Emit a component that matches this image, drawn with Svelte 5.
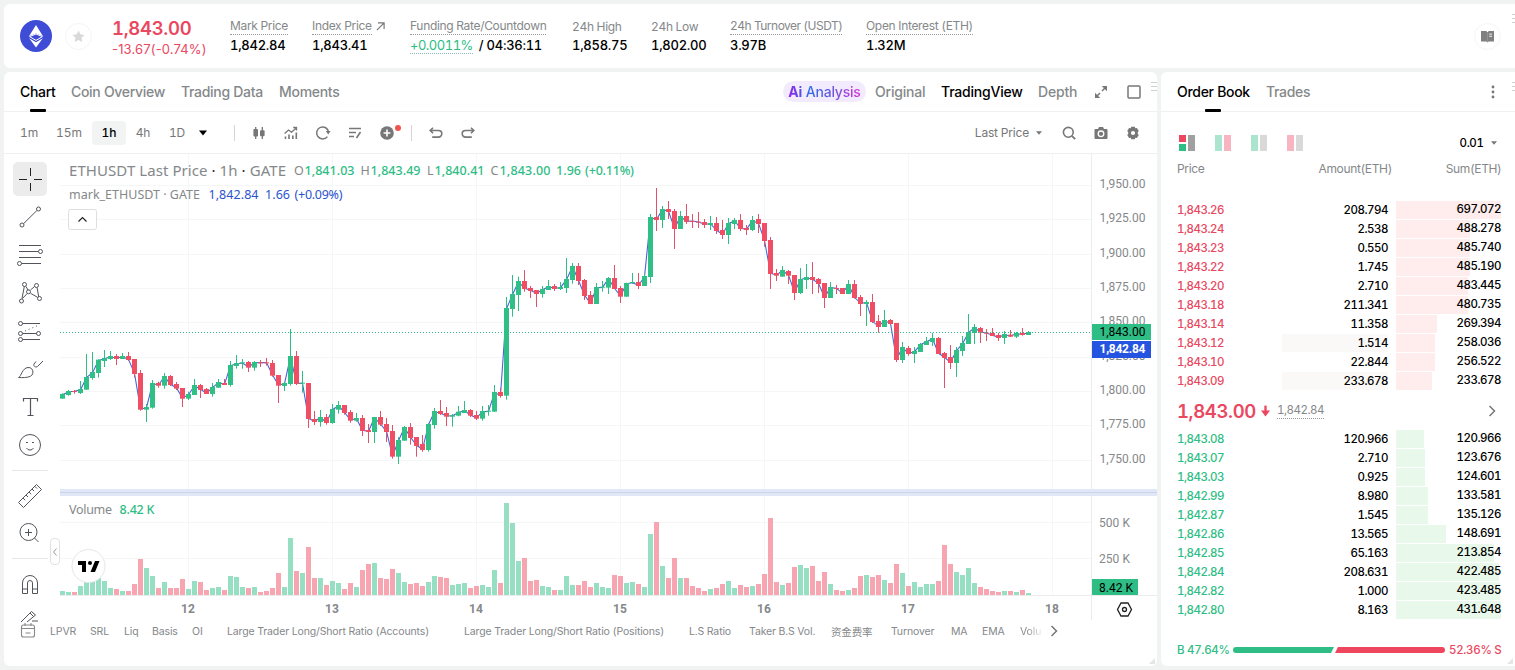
<script lang="ts">
  type Candle = { x: number; up: boolean; high: number; top: number; bottom: number; low: number; vol: number };

  const stats = [
    { label: "Mark Price", value: "1,842.84", dotted: true },
    { label: "Index Price", value: "1,843.41", dotted: true, arrow: true },
    { label: "Funding Rate/Countdown", value: "/ 04:36:11", rate: "+0.0011%", dotted: true },
    { label: "24h High", value: "1,858.75" },
    { label: "24h Low", value: "1,802.00" },
    { label: "24h Turnover (USDT)", value: "3.97B", dotted: true, tight: true },
    { label: "Open Interest (ETH)", value: "1.32M", dotted: true },
  ];

  const tabs = ["Chart", "Coin Overview", "Trading Data", "Moments"];
  const intervals = ["1m", "15m", "1h", "4h", "1D"];
  let activeTab = $state("Chart");
  let interval = $state("1h");

  // price, amount, sum, depth width, amount highlight width
  const asks: [string, string, string, number, number][] = [
    ["1,843.26", "208.794", "697.072", 105, 0],
    ["1,843.24", "2.538", "488.278", 74, 0],
    ["1,843.23", "0.550", "485.740", 74, 0],
    ["1,843.22", "1.745", "485.190", 74, 0],
    ["1,843.20", "2.710", "483.445", 72, 0],
    ["1,843.18", "211.341", "480.735", 72, 0],
    ["1,843.14", "11.358", "269.394", 41, 0],
    ["1,843.12", "1.514", "258.036", 39, 106],
    ["1,843.10", "22.844", "256.522", 39, 0],
    ["1,843.09", "233.678", "233.678", 36, 106],
  ];
  const bids: [string, string, string, number, number][] = [
    ["1,843.08", "120.966", "120.966", 28, 0],
    ["1,843.07", "2.710", "123.676", 29, 0],
    ["1,843.03", "0.925", "124.601", 29, 0],
    ["1,842.99", "8.980", "133.581", 32, 0],
    ["1,842.87", "1.545", "135.126", 32, 0],
    ["1,842.86", "13.565", "148.691", 50, 0],
    ["1,842.85", "65.163", "213.854", 98, 0],
    ["1,842.84", "208.631", "422.485", 103, 0],
    ["1,842.82", "1.000", "423.485", 104, 0],
    ["1,842.80", "8.163", "431.648", 105, 0],
  ];

  const indicators = [
    "LPVR", "SRL", "Liq", "Basis", "OI",
    "Large Trader Long/Short Ratio (Accounts)",
    "Large Trader Long/Short Ratio (Positions)",
    "L.S Ratio", "Taker B.S Vol.", "资金费率", "Turnover", "MA", "EMA", "Volu",
  ];

  // G = up, R = down; high top bottom low in thirds of a pixel below base
  const series = [
    {
      base: 280,
      rows: `G340 342 356 356,G330 333 345 347,R330 333 336 341,G303 327 339 342,G222 291 329 329,G216 276 294 299,
G238 239 279 293,G210 234 243 261,G213 228 237 240,R222 228 237 255,G219 228 237 237,R216 228 240 243,
R237 237 282 293,R270 279 389 392,G372 381 389 426,G300 309 383 386,R305 309 317 323,G279 288 317 326,
R285 288 315 318,R306 312 326 330,R324 324 356 381,G335 342 356 360,G297 315 345 345,R312 315 330 354,
R324 327 342 342,G309 321 342 350,G297 306 323 324,R297 309 315 315,G243 255 315 320,G225 249 258 266,
G237 247 249 266,R243 246 263 276,G243 246 263 272,R240 247 250 261,R234 247 250 257,R240 249 287 290,
R285 285 317 369,G305 309 318 333,G147 228 312 317,R213 228 312 315,G273 308 311 338,R309 309 417 444,
R393 417 426 435,G390 411 426 440,R402 411 429 434,G372 387 429 431,G363 375 389 401,R375 375 399 404,
R390 396 422 428,G399 414 422 425,R405 414 453 468,R432 450 456 489,G411 411 456 489,R393 411 434 438,
R414 432 456 486,R435 453 530 536,G471 480 530 552,G438 441 482 482,R429 441 474 494,R471 471 498 530,
R465 492 510 515,G429 432 510 515,G384 393 435 446,R360 393 402 405,R381 399 410 438,G402 405 410 440,
G378 395 407 409,G363 390 399 399,R387 390 407 411,R393 405 416 420,G378 393 416 422,G375 392 395 407,
G315 336 395 395,R324 336 348 353,G51 84 347 359`,
    },
    {
      base: 180,
      rows: `G285 342 387 410,G290 303 345 393,R270 303 327 335,R318 324 333 354,R330 330 342 381,G318 327 342 353,
G300 318 330 330,R312 318 327 333,G306 321 327 330,G234 297 324 339,G249 258 300 311,R249 258 303 315,
R297 300 348 360,R333 345 372 372,G309 321 372 372,G303 320 323 335,G291 294 323 342,R255 294 327 327,
R318 324 350 369,G308 309 350 350,G279 306 309 312,R279 306 318 327,G282 288 318 318,G102 111 291 309,
R24 111 120 153,G78 87 120 144,R63 87 96 117,R87 93 147 207,G93 108 147 147,R72 108 126 132,
R102 123 125 144,R96 125 128 144,R117 126 135 144,G108 129 135 150,R111 129 153 162,R120 150 165 177,
G114 129 165 192,G114 120 132 147,R102 120 147 153,R135 144 150 165,G108 120 150 153,R102 117 132 159,
R129 129 183 200,R171 180 282 327`,
    },
    {
      base: 230,
      rows: `R117 129 137 153,G108 120 140 140,R120 123 137 162,R135 135 189 210,G114 147 189 192,G102 141 150 177,
R96 141 150 192,R144 147 162 189,R159 159 204 234,G156 171 204 204,R165 174 177 192,R174 174 192 192,
G150 162 192 192,R150 162 204 206,R195 201 222 258,G210 216 222 288,R192 216 276 279,R255 273 291 308,
G240 270 291 291,R267 270 282 285,R279 279 390 396,G336 351 390 399,R348 354 372 377,G351 363 372 399,
G339 342 366 366,G321 333 345 345,G309 324 336 348,R321 324 372 372,R366 369 384 474,R345 381 399 417,
G351 360 399 441,G318 339 363 378,G252 306 342 342,G282 291 309 342,R291 294 308 339,R297 308 311 333,
R294 309 318 318,R309 315 324 333,G303 312 324 342,R300 314 320 321,G306 309 320 324,R294 309 315 317,
G303 306 315 315`,
    },
  ];

  const volumes = [
    4, 3, 3, 9, 13, 17, 17, 14, 7, 6, 4, 4, 11, 36, 27, 19, 7, 13, 7, 7, 16, 6, 14, 13, 5, 7, 8, 5, 19, 18,
    8, 7, 8, 3, 4, 7, 22, 8, 57, 24, 22, 48, 17, 17, 10, 14, 12, 6, 12, 8, 25, 31, 32, 17, 16, 26, 22, 13,
    11, 12, 9, 13, 19, 18, 17, 10, 11, 12, 7, 9, 10, 8, 25, 12, 92, 72, 34, 37, 14, 15, 9, 8, 5, 5, 19, 10,
    10, 14, 8, 12, 8, 7, 20, 19, 12, 13, 11, 8, 61, 73, 29, 17, 37, 17, 17, 9, 7, 4, 6, 7, 11, 14, 7, 10, 8,
    9, 11, 21, 77, 13, 10, 12, 28, 30, 27, 29, 14, 23, 11, 5, 4, 5, 7, 19, 20, 18, 20, 15, 12, 31, 22, 9, 13,
    8, 11, 11, 14, 50, 31, 23, 20, 27, 12, 8, 6, 4, 3, 4, 4, 3, 5, 2,
  ];

  const candles: Candle[] = [];
  for (const part of series) {
    for (const row of part.rows.split(",")) {
      const s = row.trim();
      const [high, top, bottom, low] = s.slice(1).split(" ").map((v) => part.base + Number(v) / 3);
      const i = candles.length;
      candles.push({ x: 62.5 + i * 6, up: s[0] === "G", high, top, bottom, low, vol: volumes[i] });
    }
  }

  const markLine = candles.map((c) => `${c.x},${(c.up ? c.top + 0.7 : c.bottom - 0.7).toFixed(1)}`).join(" ");

  const days = [12, 13, 14, 15, 16, 17, 18].map((d, i) => ({ label: d, x: 188.5 + i * 144 }));
  const prices = [1950, 1925, 1900, 1875, 1850, 1825, 1800, 1775, 1750].map((p, i) => ({
    label: `${Math.floor(p / 1000)},${p % 1000}.00`,
    y: 185.5 + Math.round(i * 34.33),
  }));
</script>

<div class="page">
  <header class="panel summary">
    <svg class="coin" viewBox="0 0 32 32">
      <circle cx="16" cy="16" r="16" fill="#3f4cd6" />
      <path d="M16 5L9 16.2l7-2.6 7 2.6z" fill="#fff" />
      <path d="M9.6 16.6L16 14l6.4 2.6L16 20.4z" fill="#3f4cd6" stroke="#fff" stroke-width="1" />
      <path d="M9.2 18.2L16 22.2l6.8-4L16 27.5z" fill="#fff" />
    </svg>
    <span class="star">
      <svg viewBox="0 0 16 16" width="15" height="15">
        <path d="M8 1.6l2 4.1 4.5.6-3.3 3.1.8 4.5L8 11.8l-4 2.1.8-4.5L1.5 6.3 6 5.7z" fill="#d9d9d9" />
      </svg>
    </span>
    <div class="last">
      <strong>1,843.00</strong>
      <span>-13.67(-0.74%)</span>
    </div>
    {#each stats as s}
      <div class="stat">
        <div class="stat-label" class:tight={s.tight}>
          <span class:dotted={s.dotted}>{s.label}</span>
          {#if s.arrow}
            <svg viewBox="0 0 10 10" width="9" height="9"><path d="M1 9L9 1M2.2 1H9v6.8" fill="none" stroke="#777" stroke-width="1.3" /></svg>
          {/if}
        </div>
        <div class="stat-value">
          {#if s.rate}<span class="rate">{s.rate}</span>{/if}{s.value}
        </div>
      </div>
    {/each}
    <span class="book">
      <svg viewBox="0 0 12 12" width="13" height="13">
        <path d="M0 1h4.8L6 2l1.2-1H12v9.5H7L6 11.6 5 10.5H0z" fill="#808080" />
        <path d="M6 2v9" stroke="#a4a4a4" stroke-width=".5" />
        <path d="M7.6 3.8h2.6M7.6 5.8h2.6" stroke="#fff" stroke-width=".8" />
      </svg>
    </span>
    <i class="grip edge"></i>
  </header>

  <div class="body">
    <section class="panel chart">
      <nav class="tabs">
        {#each tabs as tab}
          <button class="tab" class:active={activeTab === tab} onclick={() => (activeTab = tab)}>{tab}</button>
        {/each}
        <div class="views">
          <span class="pill"><span><b>Ai</b> Analysis</span></span>
          <span>Original</span>
          <span class="current">TradingView</span>
          <span>Depth</span>
          <svg viewBox="0 0 12 12" width="12" height="12">
            <path d="M7 5l3.5-3.5M5 7l-3.5 3.5" stroke="#777" stroke-width="1.5" />
            <path d="M6.8 0H12v5.2zM0 6.8V12h5.2z" fill="#777" />
          </svg>
          <svg viewBox="0 0 14 14" width="14" height="14"><rect x="1" y="1" width="12" height="12" rx="1" fill="none" stroke="#777" stroke-width="1.5" /></svg>
        </div>
        <i class="grip"></i>
      </nav>

      <div class="toolbar">
        {#each intervals as t}
          <button class="int" class:on={interval === t} onclick={() => (interval = t)}>{t}</button>
        {/each}
        <svg class="caret" viewBox="0 0 10 6" width="8" height="6"><path d="M0 0h10L5 6z" fill="#000" /></svg>
        <i class="sep first"></i>
        <svg class="tb" viewBox="0 0 16 16">
          <path d="M4.7 2v12M11.3 2v12" stroke="#777" stroke-width="1.3" />
          <rect x="2.4" y="4" width="4.6" height="7.4" rx="1" fill="#777" />
          <rect x="9" y="5.2" width="4.6" height="6" rx="1" fill="#777" />
        </svg>
        <svg class="tb" viewBox="0 0 16 16">
          <path d="M1.6 8.5L5.5 5l3 2.2 4.5-4M10.2 2.500h3.3v3" fill="none" stroke="#777" stroke-width="1.3" />
          <path d="M2.5 11.5V14M6 9.5V14M9.8 10.5V14M13.3 7.5V14" stroke="#777" stroke-width="1.6" />
        </svg>
        <svg class="tb" viewBox="0 0 16 16">
          <path d="M12.4 11.6A6 6 0 1 1 13.6 7.2" fill="none" stroke="#777" stroke-width="1.5" />
          <path d="M10.8 6h4.8l-2.4 3.6z" fill="#777" />
        </svg>
        <svg class="tb" viewBox="0 0 16 16">
          <path d="M2 3.5h12M2 7.5h7M2 11.5h5M9.5 13l4-6" fill="none" stroke="#777" stroke-width="1.6" />
        </svg>
        <span class="tb plus">
          <svg viewBox="0 0 16 16" width="16" height="16">
            <circle cx="8" cy="8" r="6.8" fill="#777" />
            <path d="M8 4.6v6.8M4.6 8h6.8" stroke="#fff" stroke-width="1.6" />
          </svg>
          <i class="dot"></i>
        </span>
        <i class="sep"></i>
        <svg class="tb" viewBox="0 0 16 16">
          <path d="M2.5 5.5h8a3.3 3.3 0 0 1 0 6.6H4.2M5 2.7L2.2 5.5 5 8.3" fill="none" stroke="#777" stroke-width="1.6" />
        </svg>
        <svg class="tb" viewBox="0 0 16 16">
          <path d="M13.5 5.5h-8a3.3 3.3 0 0 0 0 6.6h6.3M11 2.7l2.8 2.8L11 8.3" fill="none" stroke="#777" stroke-width="1.6" />
        </svg>
        <div class="tb-right">
          <span>Last Price</span>
          <svg class="mini" viewBox="0 0 10 6" width="6" height="4"><path d="M0 0h10L5 6z" fill="#777" /></svg>
          <svg class="tb" viewBox="0 0 16 16">
            <circle cx="7.3" cy="7.3" r="4.9" fill="none" stroke="#777" stroke-width="1.6" />
            <path d="M10.8 10.8l3.4 3.4" stroke="#777" stroke-width="1.8" />
          </svg>
          <svg class="tb" viewBox="0 0 16 16">
            <path d="M2.5 4H5l1-2h4l1 2h2.5a1 1 0 0 1 1 1v8a1 1 0 0 1-1 1h-11a1 1 0 0 1-1-1V5a1 1 0 0 1 1-1z" fill="#777" />
            <circle cx="8" cy="8.8" r="2.8" fill="none" stroke="#fff" stroke-width="1.3" />
          </svg>
          <svg class="tb" viewBox="0 0 16 16">
            <path d="M6.2 1.8h3.6l.5 1.5 1.6-.4 1.9 3.1L12.8 7v2l1 1-1.9 3.1-1.6-.4-.5 1.5H6.2l-.5-1.5-1.6.4L2.2 10l1-1V7l-1-1 1.9-3.1 1.6.4z" fill="#777" />
            <circle cx="8" cy="8" r="2.1" fill="#fff" />
          </svg>
        </div>
      </div>

      <div class="work">
        <aside class="tools">
          <span class="tool sel">
            <svg viewBox="0 0 28 28"><path d="M14.5 3v8M14.5 18v8M3 14.5h8M18 14.5h8" stroke="#222" /></svg>
          </span>
          <span class="tool">
            <svg viewBox="0 0 28 28"><path d="M7.4 20.8L20.8 7.6" /><circle cx="6" cy="22" r="2" /><circle cx="22.5" cy="6" r="2" /></svg>
          </span>
          <span class="tool">
            <svg viewBox="0 0 28 28"><path d="M3 4.5h22M3 10.5h19M3 16.5h22M5.5 22.5H25" /><circle cx="24.5" cy="10.5" r="2" /><circle cx="3.5" cy="22.5" r="2" /></svg>
          </span>
          <span class="tool">
            <svg viewBox="0 0 28 28">
              <path d="M8.3 7.5L6 19.5M10 7.5l2.2 4M14.5 11l4-3.5M21 8.5l1.800 9.5M14.7 14.4l7 4M11 14.7L6.5 19.5" />
              <circle cx="8.5" cy="5.5" r="2" /><circle cx="20.5" cy="6.5" r="2" /><circle cx="12.5" cy="12.8" r="2" /><circle cx="5.5" cy="22" r="2" /><circle cx="23.5" cy="19.5" r="2" />
            </svg>
          </span>
          <span class="tool">
            <svg viewBox="0 0 28 28">
              <path d="M6.5 6.5H24M6.5 16.5h14M6.5 22.5H24" /><path d="M9 14l14-6" stroke-dasharray="1 3" />
              <circle cx="4.5" cy="6.5" r="2" /><circle cx="4.5" cy="16.5" r="2" /><circle cx="22.5" cy="16.5" r="2" /><circle cx="4.5" cy="22.5" r="2" />
            </svg>
          </span>
          <span class="tool">
            <svg viewBox="0 0 28 28"><path d="M2.5 22.5c3-1 3.5-9.5 9.5-10 3-.2 5 1.8 4.900 4.7C17 22 11 23 2.5 22.5zM27 6l-5.5 5.5c-2 1.5-4.5-.5-3.5-2.5l2-2.5" /></svg>
          </span>
          <span class="tool">
            <svg viewBox="0 0 28 28"><path d="M7.5 8.5v-3h14v3M14.5 5.5v17M11.5 22.5h6" stroke-width="1.2" /></svg>
          </span>
          <span class="tool">
            <svg viewBox="0 0 28 28"><circle cx="14" cy="14" r="10.5" /><path d="M10.5 17a4 4 0 0 0 7 0M10 11.5h2M16 11.5h2" /></svg>
          </span>
          <hr />
          <span class="tool">
            <svg viewBox="0 0 28 28"><path d="M2.5 20.5l18-18 5 5-18 18zM7 16l2.2 2.2M10 13l2 2M13 10l2.2 2.2M16 7l2 2M19 4.5l2 2" /></svg>
          </span>
          <span class="tool short">
            <svg viewBox="0 0 28 28"><circle cx="12.5" cy="13" r="8.5" /><path d="M9 13.5h7M12.5 10v7M18.5 19l4 4" /></svg>
          </span>
          <hr />
          <span class="tool">
            <svg viewBox="0 0 28 28"><path d="M6.5 23.5V13a7.5 7.5 0 0 1 15 0v10.5h-5V13a2.5 2.5 0 0 0-5 0v10.5zM6.5 19h5M16.5 19h5" /></svg>
          </span>
          <span class="tool cut">
            <svg viewBox="0 0 28 28"><path d="M5 13L15.5 2.5l4 3.5L11 13M14 4l3.5 3.5M16 12h6" /></svg>
          </span>
        </aside>

        <div class="canvas">
          <svg viewBox="60 154 1097 466" width="1097" height="466">
            <g stroke="#f5f6f6">
              {#each days as d}
                <path d="M{d.x} 154V595" />
              {/each}
              {#each prices as p}
                <path d="M60 {p.y}H1091" />
              {/each}
              <path d="M60 522.5H1091M60 558.5H1091" />
            </g>
            <path d="M1091.5 154V620M60 595.5H1157" stroke="#ececec" />

            <polyline points={markLine} fill="none" stroke="#4767d2" stroke-width="1.1" />
            {#each candles as c}
              <rect x={c.x - 0.5} y={c.high} width="1" height={c.low - c.high} fill={c.up ? "#2ebd85" : "#e0516a"} />
              <rect x={c.x - 2.5} y={c.top} width="5" height={Math.max(1, c.bottom - c.top)} fill={c.up ? "#30bf86" : "#f04e64"} />
              <rect x={c.x - 2.5} y={595 - c.vol} width="5" height={c.vol} fill={c.up ? "#97dfc2" : "#f7a6b1"} />
            {/each}
            <path d="M60 332.5H1091" stroke="#2ebd85" stroke-dasharray="1 2" />

            <rect x="60" y="489" width="1097" height="7" fill="#e0e7f6" />
            <path d="M60 492.5H1157" stroke="#ccd4ea" />

            <g class="axis">
              {#each prices as p}
                <text x="1099.5" y={p.y + 2.4} textLength="46">{p.label}</text>
              {/each}
              <text x="1099" y="527" textLength="31">500 K</text>
              <text x="1099" y="563" textLength="31">250 K</text>
            </g>
            <g class="axis days">
              {#each days as d}
                <text x={d.x - 0.5} y="613" text-anchor="middle">{d.label}</text>
              {/each}
            </g>

            <rect x="1092" y="324" width="59" height="16" fill="#2ebd85" />
            <text class="tag" x="1099.5" y="336" textLength="46">1,843.00</text>
            <rect x="1092" y="341" width="59" height="17" fill="#2454e0" />
            <text class="tag light" x="1099.5" y="353.4" textLength="46">1,842.84</text>
            <rect x="1092" y="579" width="46" height="16" fill="#2ebd85" />
            <text class="tag" x="1099" y="592" textLength="34">8.42 K</text>

            <path d="M1121 603h7l3.5 6.5-3.5 6.5h-7l-3.5-6.5z" fill="none" stroke="#222" stroke-width="1.3" />
            <circle cx="1124.5" cy="609.5" r="2" fill="none" stroke="#222" stroke-width="1.3" />

            <g class="legend">
              <text class="title" x="69" y="176" textLength="217">ETHUSDT Last Price <tspan fill="#222">·</tspan> 1h <tspan fill="#222">·</tspan> GATE</text>
              <text x="294" y="175">O</text><text class="up" x="304.5" y="175" textLength="50">1,841.03</text>
              <text x="360.5" y="175">H</text><text class="up" x="370.5" y="175" textLength="50">1,843.49</text>
              <text x="427" y="175">L</text><text class="up" x="434.5" y="175" textLength="50">1,840.41</text>
              <text x="490.5" y="175">C</text><text class="up" x="499.5" y="175" textLength="51">1,843.00</text>
              <text class="up" x="556" y="175" textLength="25">1.96</text>
              <text class="up" x="585" y="175" textLength="49">(+0.11%)</text>
              <text x="69" y="199" textLength="131">mark_ETHUSDT · GATE</text>
              <text class="mark" x="208.5" y="199" textLength="50">1,842.84</text>
              <text class="mark" x="265" y="199" textLength="25">1.66</text>
              <text class="mark" x="294.5" y="199" textLength="48">(+0.09%)</text>
              <text x="69" y="514" textLength="43">Volume</text>
              <text class="up" x="119.5" y="514" textLength="35">8.42 K</text>
            </g>

            <rect x="68.5" y="209.5" width="28" height="20" rx="2" fill="#fff" stroke="#dedede" />
            <path d="M78.5 221.5l4-4 4 4" fill="none" stroke="#222" stroke-width="1.2" />

            <circle cx="88.5" cy="566" r="16.5" fill="#fff" stroke="#e6e6e6" />
            <path d="M78 561h8v11h-4v-7h-4zM95 561h4.5L95 572h-4.5z" fill="#000" />
            <circle cx="90" cy="563" r="2" fill="#000" />
          </svg>
          <span class="fold">
            <svg viewBox="0 0 4 8" width="4" height="8"><path d="M3.5.5L.5 4l3 3.5" fill="none" stroke="#999" /></svg>
          </span>
        </div>
      </div>

      <footer class="indicators">
        <svg class="cal" viewBox="0 0 16 16" width="16" height="16">
          <rect x="1.5" y="3" width="13" height="12" rx="2" fill="#fff" stroke="#888" stroke-width="1.1" />
          <path d="M1.5 6.5h13M5 1v3M11 1v3M5.5 11h5" stroke="#888" stroke-width="1.1" />
        </svg>
        {#each indicators as name, i}
          <span class:fade={i === indicators.length - 1}>{name}</span>
        {/each}
        <svg viewBox="0 0 8 12" width="8" height="12"><path d="M1.5 1l5 5-5 5" fill="none" stroke="#777" stroke-width="1.5" /></svg>
      </footer>
      <i class="corner"></i>
    </section>

    <section class="panel orders">
      <nav class="tabs">
        <button class="tab active">Order Book</button>
        <button class="tab">Trades</button>
        <svg class="more" viewBox="0 0 4 14" width="4" height="14">
          <circle cx="2" cy="2" r="1.4" fill="#777" /><circle cx="2" cy="7" r="1.4" fill="#777" /><circle cx="2" cy="12" r="1.4" fill="#777" />
        </svg>
        <i class="grip edge"></i>
      </nav>

      <div class="modes">
        <span class="mode both"><i></i><i></i><i></i></span>
        <span class="mode"><i class="g"></i><i class="r"></i></span>
        <span class="mode"><i class="g"></i><i></i></span>
        <span class="mode"><i class="r"></i><i></i></span>
        <span class="step">0.01 <svg viewBox="0 0 10 6" width="6" height="4"><path d="M0 0h10L5 6z" fill="#777" /></svg></span>
      </div>

      <div class="cols"><span>Price</span><span>Amount(ETH)</span><span>Sum(ETH)</span></div>

      {#snippet book(rows: [string, string, string, number, number][], side: string)}
        <div class="rows {side}">
          {#each rows as [price, amount, sum, w, hl]}
            <div class="row">
              <span class="price">{price}</span>
              <span class="amount"><i style:width="{hl}px"></i><b>{amount}</b></span>
              <span class="sum"><i style:width="{w}px"></i><b>{sum}</b></span>
            </div>
          {/each}
        </div>
      {/snippet}

      {@render book(asks, "ask")}
      <div class="mid">
        <strong>1,843.00</strong>
        <svg viewBox="0 0 10 12" width="9" height="12"><path d="M5 0v8" stroke="#ee475d" stroke-width="2.6" /><path d="M0 5.500h10L5 12z" fill="#ee475d" /></svg>
        <span>1,842.84</span>
        <svg class="go" viewBox="0 0 8 12" width="8" height="12"><path d="M1.5 1l5 5-5 5" fill="none" stroke="#777" stroke-width="1.5" /></svg>
      </div>
      {@render book(bids, "bid")}

      <div class="ratio">
        <span class="buy">B 47.64%</span>
        <i class="bar-b"></i><i class="bar-s"></i>
        <span class="sell">52.36% S</span>
      </div>
      <i class="corner"></i>
    </section>
  </div>
</div>

<style>
  :global(body) {
    background: #f1f2f2;
    overflow: hidden;
  }

  .page {
    box-sizing: border-box;
    width: 1515px;
    height: 670px;
    padding: 4px 0 4px 4px;
    display: flex;
    flex-direction: column;
    gap: 4px;
    overflow: hidden;
    font-family: Inter, "Noto Sans CJK SC", sans-serif;
    font-size: 12px;
    font-variant-numeric: tabular-nums;
    color: #000;
  }

  svg {
    display: block;
    flex: none;
  }

  button {
    border: 0;
    padding: 0;
    background: none;
    font: inherit;
    letter-spacing: inherit;
    color: inherit;
    text-align: left;
    white-space: nowrap;
  }

  .panel {
    position: relative;
    background: #fff;
    border-radius: 6px;
  }

  .grip {
    position: absolute;
    right: 0;
    top: 10px;
    width: 6px;
    height: 10px;
    background: repeating-linear-gradient(#d0d0d0 0 1px, transparent 1px 4px);
  }

  .grip.edge {
    right: -3px;
  }

  .corner {
    position: absolute;
    right: 2px;
    bottom: 2px;
    border: 3px solid transparent;
    border-right-color: #e5e5e5;
    border-bottom-color: #e5e5e5;
  }

  .summary {
    height: 64px;
    flex: none;
    display: grid;
    grid-template-columns: 45px 47px 118px 82px 98px 162px 79px 79px 136px 1fr 41px;
    align-items: center;
    padding-left: 16px;
    border-radius: 6px 0 0 6px;
  }

  .coin {
    width: 32px;
    height: 32px;
  }

  .star, .book {
    box-sizing: border-box;
    width: 27px;
    height: 27px;
    display: flex;
    align-items: center;
    justify-content: center;
    border: 1px solid #f5f5f5;
    border-radius: 50%;
  }

  .last {
    display: flex;
    flex-direction: column;
    color: #e9485f;
    white-space: nowrap;
  }

  .last strong {
    font-size: 18.5px;
    font-weight: 600;
    line-height: 24px;
    letter-spacing: -0.3px;
    margin-top: 1px;
  }

  .last span {
    font-size: 13px;
    line-height: 18px;
    font-variant-numeric: normal;
    letter-spacing: 0.15px;
  }

  .stat {
    height: 36px;
    white-space: nowrap;
  }

  .stat-label {
    display: flex;
    align-items: center;
    gap: 4px;
    height: 17px;
    color: #85888a;
    letter-spacing: -0.32px;
  }

  .stat-label.tight {
    letter-spacing: -0.5px;
  }

  .stat-label span {
    height: 16px;
    line-height: 15px;
  }

  .dotted {
    border-bottom: 1px dotted #999;
  }

  .stat-value {
    margin-top: 1px;
    font-size: 13px;
    font-weight: 500;
    line-height: 18px;
    letter-spacing: -0.27px;
  }

  .rate {
    display: inline-block;
    height: 16px;
    line-height: 16px;
    margin-right: 6px;
    font-weight: 400;
    letter-spacing: -0.5px;
    color: #2ebd85;
    border-bottom: 1px dotted #8bb;
  }

  .body {
    display: flex;
    gap: 4px;
    height: 594px;
  }

  .chart {
    width: 1153px;
    display: flex;
    flex-direction: column;
  }

  .orders {
    flex: 1;
    border-radius: 6px 0 0 6px;
    padding: 0 14px 0 16px;
  }

  .tabs {
    box-sizing: border-box;
    height: 40px;
    flex: none;
    display: grid;
    grid-template-columns: 51px 110px 98px 70px 1fr;
    align-items: center;
    padding-left: 16px;
    border-bottom: 1px solid #f0f0f0;
    font-size: 14px;
    font-weight: 500;
    letter-spacing: -0.3px;
    color: #85888a;
  }

  .tab {
    position: relative;
    height: 39px;
    justify-self: start;
  }

  .tab.active {
    color: #000;
  }

  .tab.active::after {
    content: "";
    position: absolute;
    left: 50%;
    bottom: -1px;
    width: 16px;
    height: 3px;
    margin-left: -8px;
    border-radius: 1px;
    background: #000;
  }

  .views {
    display: grid;
    grid-template-columns: 92px 66px 97px 57px 32px 14px;
    align-items: center;
    justify-content: end;
    padding: 0 16px 0 0;
    white-space: nowrap;
    letter-spacing: -0.2px;
  }

  .current {
    color: #000;
  }

  .pill {
    width: 83px;
    height: 21px;
    line-height: 21px;
    border-radius: 11px;
    background: #f1ebfd;
    text-align: center;
  }

  .pill span {
    background: linear-gradient(90deg, #9524e8, #2f6be8 30%, #6a55dc 60%, #d933d8);
    background-clip: text;
    color: transparent;
  }

  .toolbar {
    box-sizing: border-box;
    height: 42px;
    flex: none;
    display: flex;
    align-items: center;
    padding-left: 8px;
    border-bottom: 1px solid #f0f0f0;
    color: #777;
  }

  .int {
    width: 34px;
    height: 24px;
    border-radius: 4px;
    text-align: center;
    letter-spacing: -0.1px;
  }

  .int:nth-child(2) {
    width: 46px;
  }

  .int.on {
    background: #f2f3f3;
    color: #000;
    font-weight: 500;
  }

  .caret {
    margin-left: 5px;
  }

  .sep {
    width: 1px;
    height: 16px;
    margin: 0 16px;
    background: #d4d4d4;
  }

  .sep.first {
    margin: 0 16px 0 27px;
  }

  .tb {
    width: 16px;
    height: 16px;
    margin-right: 16px;
  }

  .plus {
    position: relative;
    margin-right: 0;
  }

  .dot {
    position: absolute;
    right: -6px;
    top: 0;
    width: 6px;
    height: 6px;
    border-radius: 50%;
    background: #f0544f;
  }

  .tb-right {
    display: flex;
    align-items: center;
    margin-left: auto;
    letter-spacing: -0.2px;
  }

  .mini {
    margin: 0 19px 0 7px;
  }

  .work {
    display: flex;
    height: 466px;
  }

  .tools {
    width: 56px;
    padding-top: 6px;
    box-sizing: border-box;
    display: flex;
    flex-direction: column;
  }

  .tool {
    flex: none;
    width: 34px;
    height: 34px;
    margin: 2px 0 2px 9px;
    display: flex;
    align-items: center;
    justify-content: center;
    border-radius: 5px;
  }

  .tool svg {
    width: 28px;
    height: 28px;
    fill: none;
    stroke: #51545a;
  }

  .tool.sel {
    background: #ececec;
  }

  .short {
    margin-top: 1px;
  }

  .cut {
    height: 13px;
    margin: 6px 0 0 9px;
    overflow: hidden;
    align-items: flex-start;
    border-radius: 0;
  }

  .tools hr {
    flex: none;
    width: 36px;
    height: 1px;
    margin: 6px 0 6px 8px;
    border: 0;
    background: #e6e6e6;
  }

  .canvas {
    position: relative;
    width: 1097px;
  }

  .axis text, .tag {
    font: 12px Roboto, sans-serif;
    fill: #85888a;
  }

  .axis.days text {
    font-weight: 700;
  }

  .tag {
    fill: #000;
  }

  .tag.light {
    fill: #fff;
    font-weight: 700;
  }

  .legend text {
    font: 12.5px "Noto Sans", sans-serif;
    fill: #85888a;
  }

  .legend .title {
    font-size: 15px;
  }

  .legend .up {
    fill: #2ebd85;
    font-weight: 500;
  }

  .legend .mark {
    fill: #2c53cf;
  }

  .fold {
    position: absolute;
    left: -10px;
    top: 384px;
    width: 8px;
    height: 25px;
    display: flex;
    align-items: center;
    justify-content: center;
    border: 1px solid #e2e2e2;
    border-radius: 4px;
    background: #fff;
  }

  .indicators {
    position: relative;
    display: grid;
    grid-template-columns: 30px 40px 34px 28px 40px 35px 237px 225px 60px 82px 60px 60px 31px 38px 30px 8px;
    align-items: center;
    height: 22px;
    padding-left: 16px;
    font-size: 10.5px;
    letter-spacing: -0.13px;
    color: #85888a;
    white-space: nowrap;
  }

  .cal {
    margin-top: -2px;
  }

  .fade {
    background: linear-gradient(90deg, #85888a 8px, #fff 24px);
    background-clip: text;
    color: transparent;
  }

  .orders .tabs {
    grid-template-columns: 89px 60px 1fr;
    margin: 0 -14px 0 -16px;
  }

  .more {
    justify-self: end;
    margin-right: 20px;
  }

  .modes {
    display: flex;
    align-items: center;
    gap: 20px;
    height: 20px;
    padding-top: 21px;
    padding-left: 2px;
  }

  .mode {
    display: grid;
    grid-template-columns: 7px 7px;
    gap: 2px;
    height: 16px;
  }

  .mode i {
    background: #d9d9d9;
  }

  .mode .g {
    background: #abe5cf;
  }

  .mode .r {
    background: #f9b4c2;
  }

  .both i:nth-child(1) {
    background: #ee475d;
  }

  .both i:nth-child(2) {
    grid-row: 1 / 3;
    grid-column: 2;
    background: #a0a0a0;
  }

  .both i:nth-child(3) {
    background: #2ebd85;
  }

  .step {
    display: flex;
    align-items: center;
    gap: 8px;
    margin: 0 4px 0 auto;
    font-size: 11.5px;
    font-weight: 500;
    letter-spacing: -0.4px;
  }

  .cols {
    display: grid;
    grid-template-columns: 100px 115px 1fr;
    height: 32px;
    line-height: 32px;
    letter-spacing: -0.35px;
    color: #85888a;
  }

  .cols span + span {
    text-align: right;
  }

  .rows.ask {
    padding-top: 16px;
  }

  .row {
    display: grid;
    grid-template-columns: 105px 114px 105px;
    height: 19px;
    line-height: 19px;
    font-size: 11.5px;
    letter-spacing: -0.48px;
  }

  .price {
    font-weight: 500;
  }

  .row b {
    position: relative;
    font-weight: 500;
  }

  .ask .price {
    color: #e9485f;
  }

  .bid .price {
    color: #2ebd85;
  }

  .amount, .sum {
    position: relative;
    text-align: right;
  }

  .amount {
    padding-right: 8px;
  }

  .sum {
    line-height: 17px;
  }

  .row i {
    position: absolute;
    left: 0;
    top: 0;
    height: 18px;
  }

  .amount i {
    background: #fbf9f8;
  }

  .ask .sum i {
    background: #feedec;
  }

  .bid .sum i {
    background: #e8f8ea;
  }

  .mid {
    display: flex;
    align-items: center;
    height: 39px;
    color: #85888a;
  }

  .mid strong {
    width: 84px;
    font-size: 18.5px;
    font-weight: 600;
    letter-spacing: -0.35px;
    color: #e9485f;
  }

  .mid span {
    height: 15px;
    line-height: 14px;
    margin-left: 7px;
    font-size: 11.5px;
    letter-spacing: -0.48px;
    border-bottom: 1px dotted #999;
  }

  .go {
    margin: 0 5px 0 auto;
  }

  .ratio {
    display: flex;
    align-items: center;
    height: 20px;
    margin-top: 20px;
    font-size: 11.5px;
    letter-spacing: -0.3px;
    white-space: nowrap;
  }

  .ratio span {
    font-weight: 500;
  }

  .buy {
    width: 56px;
    color: #2ebd85;
  }

  .sell {
    margin-left: 4px;
    color: #e9485f;
  }

  .bar-b, .bar-s {
    height: 6px;
    width: 101px;
    background: #2ebd85;
    border-radius: 3px 0 0 3px;
    clip-path: polygon(0 0, 100% 0, calc(100% - 3px) 100%, 0 100%);
  }

  .bar-s {
    width: 110px;
    margin-left: 1px;
    background: #ee475d;
    border-radius: 0 3px 3px 0;
    clip-path: polygon(3px 0, 100% 0, 100% 100%, 0 100%);
  }
</style>
